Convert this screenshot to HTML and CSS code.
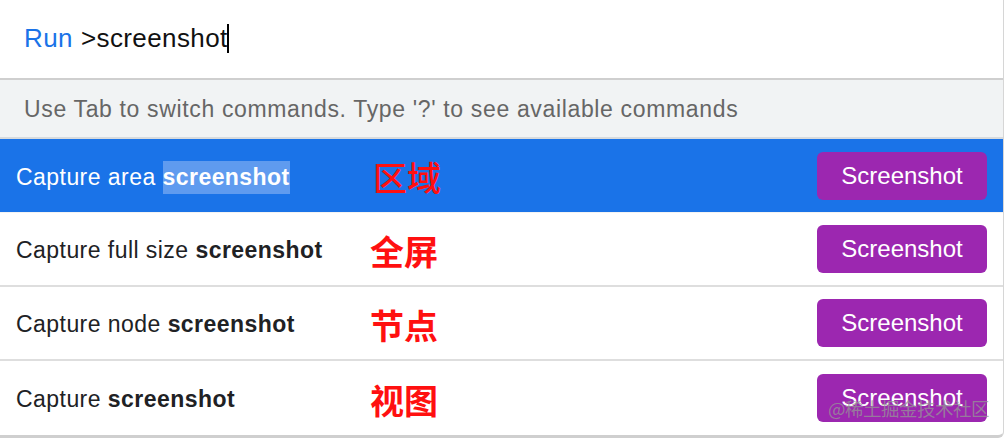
FILE: index.html
```html
<!DOCTYPE html>
<html>
<head>
<meta charset="utf-8">
<link rel="stylesheet" href="styles.css">
</head>
<body>
<div class="palette">
  <div class="prompt">
    <span class="run">Run</span>
    <span class="query">&gt;screenshot</span><span class="caret"></span>
  </div>
  <div class="hint">Use Tab to switch commands. Type '?' to see available commands</div>
  <div class="list">
    <div class="row selected">
      <div class="title">Capture area <b class="match">screenshot</b></div>
      <div class="note">区域</div>
      <button class="btn">Screenshot</button>
    </div>
    <div class="row">
      <div class="title">Capture full size <b>screenshot</b></div>
      <div class="note">全屏</div>
      <button class="btn">Screenshot</button>
    </div>
    <div class="row">
      <div class="title">Capture node <b>screenshot</b></div>
      <div class="note">节点</div>
      <button class="btn">Screenshot</button>
    </div>
    <div class="row">
      <div class="title">Capture <b>screenshot</b></div>
      <div class="note">视图</div>
      <button class="btn">Screenshot</button>
    </div>
  </div>
  <div class="watermark">@稀土掘金技术社区</div>
</div>
</body>
</html>
```
FILE: styles.css
```css
html, body {
  margin: 0;
  padding: 0;
  background: #ffffff;
}
body {
  font-family: "Liberation Sans", Arial, "Noto Sans CJK SC", sans-serif;
  width: 1006px;
  height: 440px;
  overflow: hidden;
}
.palette {
  position: relative;
  width: 1004px;
  height: 438px;
  border-right: 1px solid #d6d6d6;
  border-bottom: 3px solid #cfcfcf;
  border-bottom-right-radius: 6px;
  box-sizing: border-box;
  display: flex;
  flex-direction: column;
}
.prompt {
  height: 80px;
  box-sizing: border-box;
  padding: 22px 0 0 24px;
  display: flex;
  align-items: flex-start;
  font-size: 26px;
  letter-spacing: 0.4px;
  line-height: 32px;
  border-bottom: 2px solid #cfcfcf;
}
.run {
  color: #1a73e8;
  margin-right: 8px;
}
.query {
  color: #111111;
}
.caret {
  display: inline-block;
  width: 2px;
  height: 29px;
  margin-top: 2px;
  margin-left: -1px;
  background: #000;
}
.hint {
  height: 59px;
  box-sizing: border-box;
  background: #f1f3f4;
  color: #666666;
  font-size: 23px;
  letter-spacing: 0.65px;
  padding: 16px 0 0 24px;
  border-bottom: 2px solid #d7dadd;
}
.list {
  display: flex;
  flex-direction: column;
}
.row {
  height: 74px;
  box-sizing: border-box;
  display: flex;
  align-items: center;
  padding: 0 16px 0 16px;
  border-bottom: 2px solid #dedede;
  color: #202124;
}
.row:last-child {
  border-bottom: none;
}
.row.selected {
  background: #1a73e8;
  color: #ffffff;
  border-bottom: 1px solid #f3f3f3;
}
.title {
  width: 354px;
  font-size: 23px;
  letter-spacing: 0.45px;
  padding-top: 3px;
}
.title b {
  font-weight: bold;
}
.match {
  background: #5f9bef;
  padding: 3px 0 4px;
}
.note {
  font-family: "Noto Sans CJK SC", sans-serif;
  font-weight: bold;
  color: #ff1010;
  font-size: 34px;
  line-height: 40px;
  margin-top: 4px;
  flex: 1;
}
.selected .note {
  font-weight: 500;
  margin-top: 2px;
  padding-left: 3px;
}
.btn {
  width: 170px;
  height: 48px;
  border: none;
  border-radius: 6px;
  background: #9c27b0;
  color: #ffffff;
  font-family: "Liberation Sans", Arial, sans-serif;
  font-size: 24px;
  padding: 0;
  margin-right: 0;
}
.watermark {
  position: absolute;
  right: 14px;
  bottom: 14px;
  font-family: "Noto Sans CJK SC", sans-serif;
  font-size: 18.5px;
  color: rgba(150, 150, 150, 0.75);
  letter-spacing: -0.5px;
}
```
